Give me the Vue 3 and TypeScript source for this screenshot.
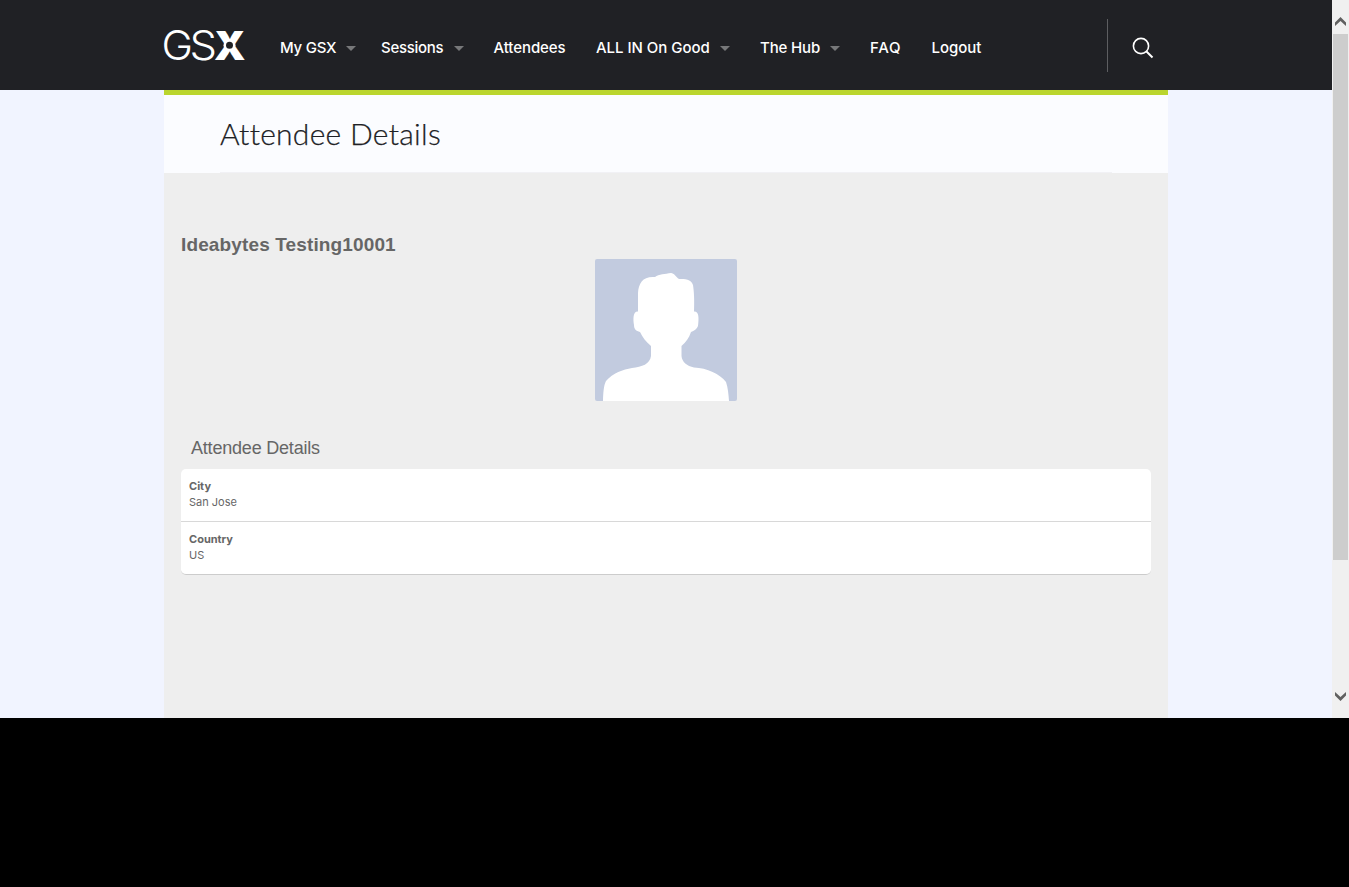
<script setup lang="ts">
interface NavItem {
  label: string
  width: number
  spacing: number
  menu?: boolean
}

const navItems: NavItem[] = [
  { label: 'My GSX', width: 76, spacing: -0.25, menu: true },
  { label: 'Sessions', width: 82.5, spacing: -0.28, menu: true },
  { label: 'Attendees', width: 72.5, spacing: -0.08 },
  { label: 'ALL IN On Good', width: 134, spacing: -0.03, menu: true },
  { label: 'The Hub', width: 80, spacing: -0.15, menu: true },
  { label: 'FAQ', width: 31.5, spacing: 0.7 },
  { label: 'Logout', width: 50, spacing: -0.05 },
]

const details = [
  { name: 'City', value: 'San Jose' },
  { name: 'Country', value: 'US' },
]
</script>

<template>
  <div class="screen">
    <div class="viewport">
      <div class="page">
        <header class="topbar">
          <div class="topbar-inner">
            <svg class="logo" width="84" height="40" viewBox="0 0 84 40">
              <text class="logo-thin" x="-2.4" y="35.3" textLength="31.5" lengthAdjust="spacingAndGlyphs">G</text>
              <text class="logo-thin" x="25.6" y="35.3" textLength="27.5" lengthAdjust="spacingAndGlyphs">S</text>
              <text class="logo-bold" x="50" y="35.3" textLength="31.5" lengthAdjust="spacingAndGlyphs">X</text>
              <circle cx="65.500" cy="20.200" r="6" fill="#fff" />
              <circle cx="65.500" cy="20.200" r="3.500" fill="#202125" />
            </svg>
            <nav class="nav">
              <a
                v-for="item in navItems"
                :key="item.label"
                class="nav-item"
                :style="{ width: item.width + 'px', letterSpacing: item.spacing + 'px' }"
              >
                <span>{{ item.label }}</span>
                <i v-if="item.menu" class="caret"></i>
              </a>
            </nav>
            <div class="search">
              <svg width="22" height="22" viewBox="0 0 22 22" fill="none" stroke="#fff">
                <circle cx="9" cy="9" r="7.6" stroke-width="1.6" />
                <path d="M14.5 14.5L20.5 20.5" stroke-width="2" />
              </svg>
            </div>
          </div>
        </header>
        <main class="content">
          <div class="title"><h1>Attendee Details</h1></div>
          <section class="profile">
            <h2>Ideabytes Testing10001</h2>
            <svg class="avatar" width="142" height="142" viewBox="0 0 142 142">
              <rect width="142" height="142" rx="2" fill="#c2cbdf" />
              <path
                fill="#fff"
                d="M8 142C8.300 134 8.500 127 11 122C18 114 28 110.500 37 109C47 108 55 105 56 97V87C51 83 47.500 78 45 73C41 72 39 70 39 66C38 60 38 52 43 52.500V34C43.500 24 48 17 60 18C64 15 70 15 76 14C79 14 81 18 84 20C90 20 96 20 98 26C99 32 99.500 42 99 52.500C104 52 104 59 103 67C102 70 99 72 96 73C94 79 91 83 86.500 87V97C87 103 92 107 99 108.500C112 109 125 115 131 123C133 129 133.500 135 134 142Z"
              />
            </svg>
            <h3>Attendee Details</h3>
            <dl class="card">
              <div v-for="row in details" :key="row.name" class="row">
                <dt>{{ row.name }}</dt>
                <dd>{{ row.value }}</dd>
              </div>
            </dl>
          </section>
        </main>
      </div>
      <aside class="scrollbar">
        <svg width="12" height="8" viewBox="0 0 12 8" fill="#606060"><path d="M0 5.500L5.500 0L11 5.500V9L5.500 4L0 9Z" /></svg>
        <div class="thumb"></div>
        <svg width="12" height="8" viewBox="0 0 12 8" fill="#606060"><path d="M0 0L5.500 5L11 0V3.500L5.500 9L0 3.500Z" /></svg>
      </aside>
    </div>
  </div>
</template>

<style>
body {
  margin: 0;
  background: #000;
}
</style>

<style scoped>
.screen {
  width: 1349px;
  height: 887px;
  background: #000;
  overflow: hidden;
}
.viewport {
  display: flex;
  height: 718px;
  background: #f1f4ff;
}
.page {
  display: flex;
  flex-direction: column;
  width: 1332px;
}
.topbar {
  height: 90px;
  background: #202125;
}
.topbar-inner {
  display: flex;
  align-items: center;
  width: 1004px;
  height: 90px;
  margin-left: 164px;
}
.logo {
  flex: none;
  overflow: visible;
}
.logo-thin {
  font: 300 41px Inter, sans-serif;
  fill: #fff;
}
.logo-bold {
  font: 900 40px Inter, sans-serif;
  fill: #fff;
}
.nav {
  display: flex;
  gap: 30px;
  flex: 1;
  padding: 5px 0 0 32px;
}
.nav-item {
  display: flex;
  flex: none;
  align-items: center;
  justify-content: space-between;
  font: 500 15px/20px Inter, sans-serif;
  color: #fff;
  white-space: nowrap;
}
.nav-item:nth-child(1) {
  margin-right: -5px;
}
.caret {
  margin-top: 1px;
  border: 5px solid transparent;
  border-top-color: #77787a;
  border-bottom: 0;
}
.search {
  display: flex;
  align-items: center;
  width: 36px;
  height: 53px;
  padding-left: 24px;
  border-left: 1px solid #5d5e61;
}
.search svg {
  margin-top: 5px;
}
.content {
  display: flex;
  flex: 1;
  flex-direction: column;
  width: 1004px;
  margin-left: 164px;
  background: #eee;
}
.title {
  box-sizing: border-box;
  height: 83px;
  padding: 0 56px;
  border-top: 5px solid #bad52e;
  background: #fbfcff;
}
h1 {
  box-sizing: border-box;
  height: 78px;
  margin: 0;
  padding-top: 18px;
  border-bottom: 1px solid #f1f1f5;
  font: 300 30px/40px Lato, sans-serif;
  letter-spacing: 0.28px;
  font-variant-ligatures: none;
  color: #202125;
  -webkit-text-stroke: 0.25px #202125;
}
.profile {
  display: flex;
  flex-direction: column;
  padding: 60px 17px 0;
  color: #666;
}
h2 {
  margin: 0;
  font: bold 19px/24px "Liberation Sans", Arial, sans-serif;
  letter-spacing: 0.13px;
}
.avatar {
  align-self: center;
  margin-top: 2px;
}
h3 {
  margin: 35px 0 0 10px;
  font: 400 18px/24px "Liberation Sans", Arial, sans-serif;
  letter-spacing: -0.2px;
}
.card {
  margin: 9px 0 0;
  border-bottom: 1px solid #ccc;
  border-radius: 5px;
  background: #fff;
}
.row {
  box-sizing: border-box;
  height: 52px;
  padding: 9px 8px 0;
}
.row + .row {
  height: 53px;
  border-top: 1px solid #d8d8d8;
}
dt,
dd {
  margin: 0;
  font: 400 11px/16px Inter, sans-serif;
  color: #666;
}
dt {
  font-weight: 700;
}
.scrollbar {
  display: flex;
  flex-direction: column;
  align-items: center;
  box-sizing: border-box;
  width: 17px;
  padding-top: 17px;
  background: #f0f0f0;
}
.scrollbar svg {
  overflow: visible;
}
.thumb {
  width: 15px;
  height: 526px;
  margin: 9px 0 132px;
  background: #cdcdcd;
}
</style>
